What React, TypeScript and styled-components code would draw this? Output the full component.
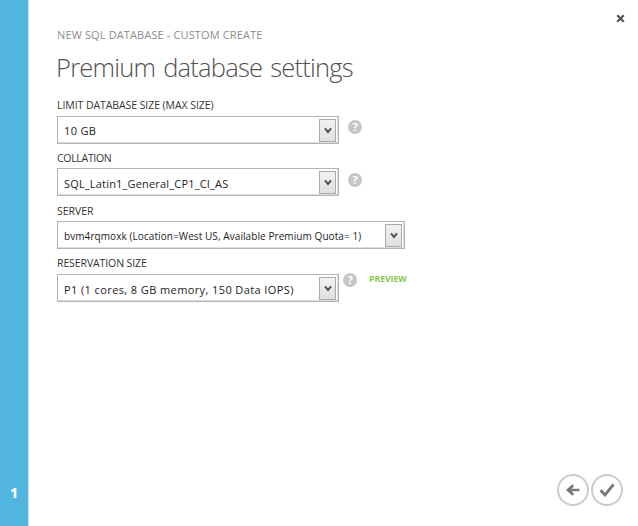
import React from "react";
import styled, { createGlobalStyle } from "styled-components";

const GlobalStyle = createGlobalStyle`
  * { box-sizing: border-box; }
  body { margin: 0; background: #fff; font-family: "Open Sans", "Noto Sans", sans-serif; }
`;

const Dialog = styled.div`
  display: flex;
  width: 638px;
  height: 526px;
  background: #fff;
  overflow: hidden;
`;

const StepRail = styled.aside`
  flex: 0 0 29px;
  display: flex;
  flex-direction: column;
  justify-content: flex-end;
  align-items: center;
  padding-bottom: 23px;
  background: #52b5e0;
  border-right: 1px solid #c5e6f5;
  color: #fff;
  font-family: "Noto Sans", sans-serif;
  font-size: 14px;
  font-weight: 800;
  line-height: 20px;
`;

const Main = styled.main`
  flex: 1;
  display: flex;
  flex-direction: column;
  padding: 0 15px 0 28px;
`;

const Header = styled.header`
  display: flex;
  justify-content: space-between;
  height: 97px;
`;

const Heading = styled.div`
  padding-top: 27px;
  white-space: nowrap;
`;

const Eyebrow = styled.div`
  height: 16px;
  line-height: 16px;
  font-size: 11px;
  font-weight: 500;
  letter-spacing: 0.13px;
  color: #8c8c8c;
`;

const Title = styled.h1`
  margin: 5px 0 0 -1px;
  height: 38px;
  line-height: 39px;
  font-size: 25.5px;
  font-weight: 300;
  letter-spacing: -0.77px;
  word-spacing: 2px;
  color: #505050;
`;

const CloseButton = styled.button`
  width: 9px;
  height: 9px;
  margin: 14px -2px 0 0;
  padding: 0;
  border: 0;
  background: none;
  svg { display: block; }
`;

const Form = styled.form`
  flex: 1;
`;

const Field = styled.div<{ $height: number }>`
  height: ${(p) => p.$height}px;
`;

const Label = styled.label<{ $track: number; $height: number; $line: number }>`
  display: block;
  height: ${(p) => p.$height}px;
  line-height: ${(p) => p.$line}px;
  font-size: 10.5px;
  letter-spacing: ${(p) => p.$track}px;
  color: #333;
  white-space: nowrap;
`;

const Control = styled.div`
  display: flex;
  align-items: flex-start;
`;

const Select = styled.div<{ $width: number; $size: number; $track: number; $line: number }>`
  display: flex;
  justify-content: space-between;
  width: ${(p) => p.$width}px;
  height: 28px;
  padding: 2px 2px 2px 6px;
  border: 1px solid #b4b4b4;
  box-shadow: inset 0 -1px 0 #ddd, inset -1px 0 0 #ddd;
  color: #1c1c24;
  font-size: ${(p) => p.$size}px;
  letter-spacing: ${(p) => p.$track}px;
  line-height: ${(p) => p.$line}px;
  white-space: nowrap;
`;

const DropButton = styled.span`
  display: flex;
  align-items: center;
  justify-content: center;
  width: 17px;
  height: 23px;
  border: 1px solid #aaa;
  background: linear-gradient(#f2f2f2, #dfdfdf);
`;

const Help = styled.span<{ $left: number; $top: number }>`
  margin: ${(p) => p.$top}px 0 0 ${(p) => p.$left}px;
  display: flex;
  align-items: center;
  justify-content: center;
  width: 14px;
  height: 14px;
  border-radius: 50%;
  background: #c6c6c6;
  color: #fff;
  font-size: 11px;
  font-weight: 700;
  line-height: 14px;
`;

const Preview = styled.span`
  margin: -3px 0 0 12px;
  font-size: 8.8px;
  font-weight: 700;
  line-height: 16px;
  letter-spacing: -0.1px;
  color: #8cc751;
`;

const Footer = styled.footer`
  display: flex;
  justify-content: flex-end;
  gap: 2px;
  height: 52px;
`;

const RoundButton = styled.button`
  display: flex;
  align-items: center;
  justify-content: center;
  width: 32px;
  height: 32px;
  padding: 0;
  border: 2px solid #cbcbcb;
  border-radius: 50%;
  background: #fff;
`;

const Chevron = () => (
  <svg width="8" height="7" viewBox="0 0 8 7">
    <path d="M1 1.3 4 5 7 1.3" fill="none" stroke="#4b4b4b" strokeWidth="1.9" />
  </svg>
);

type FieldSpec = {
  label: string;
  labelTrack: number;
  labelHeight: number;
  labelLine: number;
  value: string;
  width: number;
  size: number;
  track: number;
  line: number;
  height: number;
  help?: [number, number];
  preview?: boolean;
};

const fields: FieldSpec[] = [
  { label: "LIMIT DATABASE SIZE (MAX SIZE)", labelTrack: -0.07, labelHeight: 19, labelLine: 16, value: "10 GB", width: 282, size: 11, track: 0.35, line: 24, height: 52, help: [9, 4] },
  { label: "COLLATION", labelTrack: -0.3, labelHeight: 19, labelLine: 18, value: "SQL_Latin1_General_CP1_CI_AS", width: 282, size: 11, track: 0.18, line: 26, height: 53, help: [9, 5] },
  { label: "SERVER", labelTrack: -0.05, labelHeight: 19, labelLine: 18, value: "bvm4rqmoxk (Location=West US, Available Premium Quota= 1)", width: 348, size: 10, track: 0.08, line: 24, height: 52 },
  { label: "RESERVATION SIZE", labelTrack: -0.1, labelHeight: 20, labelLine: 18, value: "P1 (1 cores, 8 GB memory, 150 Data IOPS)", width: 282, size: 11, track: 0.4, line: 25, height: 53, help: [4, -1], preview: true },
];

export default function App() {
  return (
    <>
      <GlobalStyle />
      <Dialog>
        <StepRail>1</StepRail>
        <Main>
          <Header>
            <Heading>
              <Eyebrow>NEW SQL DATABASE - CUSTOM CREATE</Eyebrow>
              <Title>Premium database settings</Title>
            </Heading>
            <CloseButton aria-label="Close">
              <svg width="9" height="9" viewBox="0 0 9 9">
                <path d="M1.2 1.2 7.8 7.8M7.8 1.2 1.2 7.8" stroke="#555" strokeWidth="2.2" />
              </svg>
            </CloseButton>
          </Header>
          <Form>
            {fields.map((f) => (
              <Field key={f.label} $height={f.height}>
                <Label $track={f.labelTrack} $height={f.labelHeight} $line={f.labelLine}>{f.label}</Label>
                <Control>
                  <Select $width={f.width} $size={f.size} $track={f.track} $line={f.line}>
                    <span>{f.value}</span>
                    <DropButton><Chevron /></DropButton>
                  </Select>
                  {f.help && <Help $left={f.help[0]} $top={f.help[1]}>?</Help>}
                  {f.preview && <Preview>PREVIEW</Preview>}
                </Control>
              </Field>
            ))}
          </Form>
          <Footer>
            <RoundButton aria-label="Back">
              <svg width="16" height="14" viewBox="0 0 16 14">
                <path d="M14.5 7H3M8.3 2.2 3 7l5.3 4.8" fill="none" stroke="#777" strokeWidth="2.7" />
              </svg>
            </RoundButton>
            <RoundButton aria-label="Complete">
              <svg width="16" height="14" viewBox="0 0 16 14">
                <path d="M1.5 7.2 6 11.8 14.5 1.5" fill="none" stroke="#777" strokeWidth="2.8" />
              </svg>
            </RoundButton>
          </Footer>
        </Main>
      </Dialog>
    </>
  );
}
